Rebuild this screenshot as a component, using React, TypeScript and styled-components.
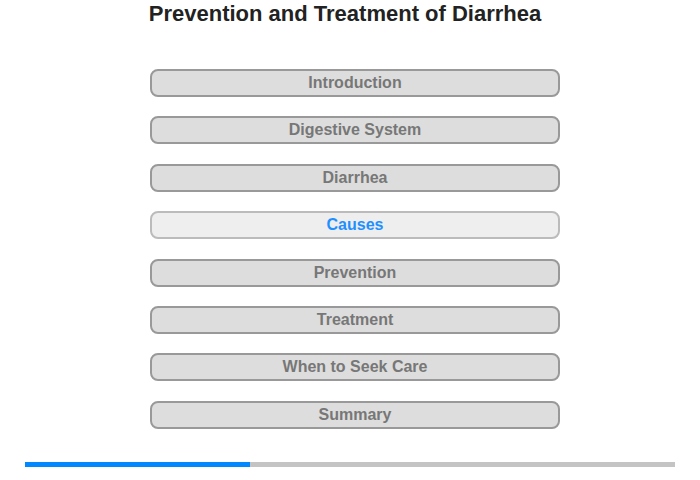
import React from "react";
import styled, { createGlobalStyle } from "styled-components";

const sections = [
  "Introduction",
  "Digestive System",
  "Diarrhea",
  "Causes",
  "Prevention",
  "Treatment",
  "When to Seek Care",
  "Summary",
];

const current = 3;
const progress = 225 / 650;

const GlobalStyle = createGlobalStyle`
  body {
    margin: 0;
    background: #fff;
    font-family: "Liberation Sans", Arial, sans-serif;
  }
`;

const Page = styled.div`
  width: 700px;
  height: 480px;
  display: flex;
  flex-direction: column;
  align-items: center;
`;

const Title = styled.h1`
  margin: 1px 0 0 -10px;
  font-size: 22px;
  line-height: 26px;
  font-weight: bold;
  color: #222;
`;

const Menu = styled.div`
  margin: 42px 0 0 10px;
  width: 410px;
  display: grid;
  row-gap: 19.4px;
`;

const Item = styled.button<{ $active?: boolean }>`
  box-sizing: border-box;
  height: 28px;
  width: 100%;
  padding: 0;
  border: 2px solid ${(p) => (p.$active ? "#bbbbbb" : "#999999")};
  border-radius: 8px;
  background: ${(p) => (p.$active ? "#eeeeee" : "#dddddd")};
  color: ${(p) => (p.$active ? "#1e90ff" : "#777777")};
  font-family: "Liberation Sans", Arial, sans-serif;
  font-size: 16px;
  font-weight: bold;
  cursor: pointer;
`;

const Track = styled.div`
  margin-top: 33px;
  width: 650px;
  height: 5px;
  background: #c4c4c4;
`;

const Fill = styled.div`
  height: 100%;
  background: #0088ff;
`;

export default function App() {
  return (
    <Page>
      <GlobalStyle />
      <Title>Prevention and Treatment of Diarrhea</Title>
      <Menu>
        {sections.map((s, i) => (
          <Item key={s} $active={i === current}>
            {s}
          </Item>
        ))}
      </Menu>
      <Track>
        <Fill style={{ width: `${progress * 100}%` }} />
      </Track>
    </Page>
  );
}
